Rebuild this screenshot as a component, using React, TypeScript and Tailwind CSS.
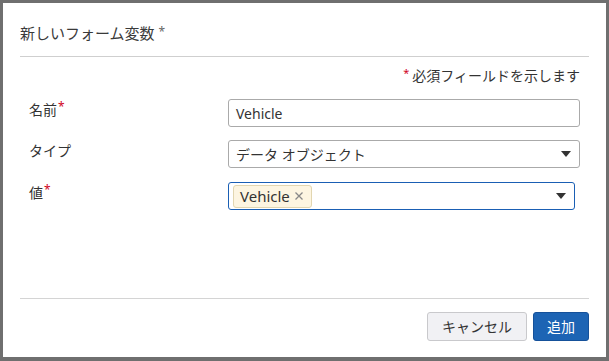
import React from 'react';

const font = { fontFamily: '"Noto Sans", "Noto Sans CJK JP", sans-serif' };

function Caret() {
  return (
    <svg width="10" height="6" viewBox="0 0 10 6" className="shrink-0">
      <path d="M0 0h10L5 6z" fill="#333" />
    </svg>
  );
}

function Req() {
  return <span className="text-[#d0021b] text-[12px] relative -top-[4px] ml-[1px]">*</span>;
}

export default function App() {
  return (
    <div className="w-[609px] h-[361px] bg-[#6f6f6f] pl-[3px] pt-[3px] pr-[3px] pb-[4px]" style={font}>
      <div className="w-full h-full bg-white flex flex-col text-[#333]">
        {/* header */}
        <div className="mx-[17px] pt-[20px] pb-[11px] border-b border-[#cfcfcf]">
          <div className="text-[15px] leading-[20px] text-[#3a3a3a]">
            新しいフォーム変数
            <span className="text-[12px] text-[#666] relative -top-[3px] ml-[4px]">*</span>
          </div>
        </div>

        {/* body */}
        <div className="flex-1 px-[26px] pt-[9px]">
          <div className="flex justify-end items-center text-[14px] leading-[20px]">
            <span className="text-[#d0021b] text-[11px] relative -top-[3px] mr-[3px]">*</span>
            必須フィールドを示します
          </div>

          <div className="flex mt-[13px]">
            <div className="w-[199px] pt-[1px] text-[14px] leading-[20px]">
              名前<Req />
            </div>
            <div className="flex-1 h-[28px] border border-[#aaa] rounded-[3px] flex items-center px-[7px] text-[14px]">
              Vehicle
            </div>
          </div>

          <div className="flex mt-[13px]">
            <div className="w-[199px] pt-[1px] text-[14px] leading-[20px]">タイプ</div>
            <div className="flex-1 h-[28px] border border-[#aaa] rounded-[3px] flex items-center pl-[7px] pr-[8px] text-[14px]">
              <span className="flex-1">データ オブジェクト</span>
              <Caret />
            </div>
          </div>

          <div className="flex mt-[14px]">
            <div className="w-[199px] pt-[1px] text-[14px] leading-[20px]">
              値<Req />
            </div>
            <div className="w-[347px] h-[28px] border border-[#1a5fb4] rounded-[3px] flex items-center pl-[4px] pr-[8px]">
              <span className="flex-1 flex">
                <span className="h-[23px] border border-[#e2d6b0] bg-[#fdf5e1] rounded-[3px] flex items-center pl-[6px] pr-[7px] text-[15px] gap-[4px]">
                  Vehicle
                  <svg width="10" height="10" viewBox="0 0 10 10">
                    <path d="M1.5 1.5l7 7M8.5 1.5l-7 7" stroke="#888" strokeWidth="1.3" />
                  </svg>
                </span>
              </span>
              <Caret />
            </div>
          </div>
        </div>

        {/* footer */}
        <div className="mx-[17px] border-t border-[#d4d4d4] pt-[13px] pb-[16px] flex justify-end gap-[6px]">
          <button className="w-[100px] h-[29px] border border-[#c9c9cc] bg-[#f1f1f4] rounded-[3px] text-[14px] text-[#333]">
            キャンセル
          </button>
          <button className="w-[56px] h-[29px] border border-[#15519a] bg-[#1d64b4] rounded-[3px] text-[14px] text-white">
            追加
          </button>
        </div>
      </div>
    </div>
  );
}
